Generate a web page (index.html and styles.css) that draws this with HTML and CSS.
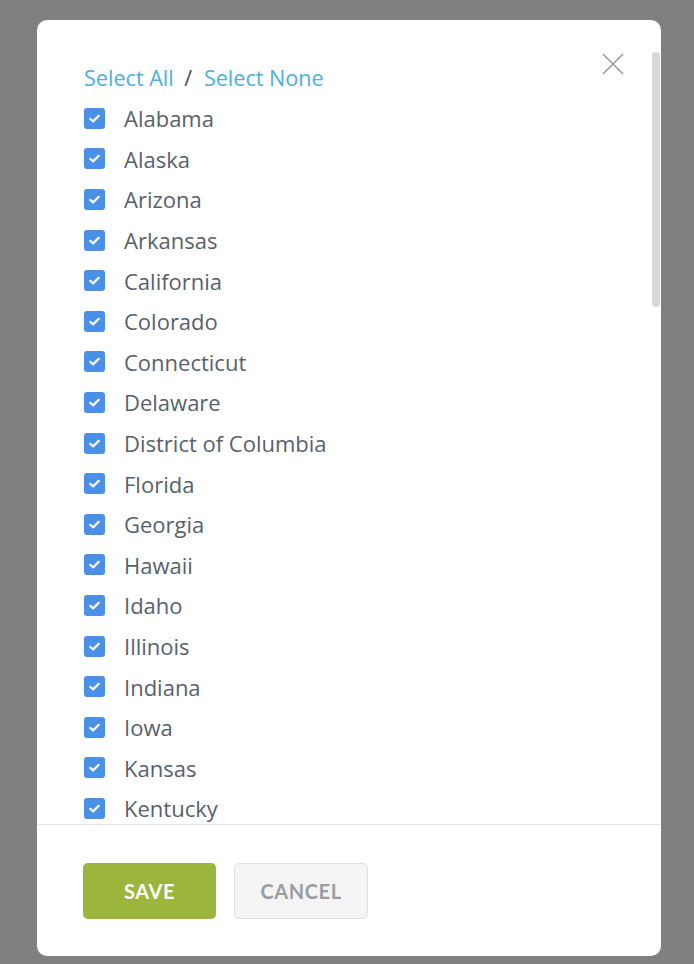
FILE: index.html
```html
<!DOCTYPE html>
<html lang="en">

<head>
    <meta charset="UTF-8">
    <meta name="viewport" content="width=device-width, initial-scale=1.0">
    <title>Select states</title>
    <link rel="stylesheet" href="styles.css">
</head>

<body>
    <div class="modal">
        <button class="close" aria-label="Close">
            <svg width="22" height="22" viewBox="0 0 22 22">
                <path d="M1 1L21 21M21 1L1 21" stroke="#9a9a9a" stroke-width="1.6" fill="none" />
            </svg>
        </button>
        <div class="thumb"></div>

        <div class="modal-body">
            <div class="select-links">
                <a href="#">Select All</a>
                <span class="sep">/</span>
                <a href="#">Select None</a>
            </div>
            <ul class="states" id="states"></ul>
        </div>

        <div class="modal-footer">
            <button class="btn btn-save">SAVE</button>
            <button class="btn btn-cancel">CANCEL</button>
        </div>
    </div>

    <script>
        // only the rows visible above the footer
        const states = ['Alabama', 'Alaska', 'Arizona', 'Arkansas', 'California', 'Colorado', 'Connecticut',
            'Delaware', 'District of Columbia', 'Florida', 'Georgia', 'Hawaii', 'Idaho', 'Illinois', 'Indiana',
            'Iowa', 'Kansas', 'Kentucky'];

        const list = document.getElementById('states');
        for (let name of states) {
            let li = document.createElement('li');
            li.innerHTML = `<span class="box"><svg width="21" height="21" viewBox="0 0 21 21"><path d="M6.2 10.8l2.9 2.6 5.7-5.6" stroke="#fff" stroke-width="2.2" fill="none" stroke-linecap="round" stroke-linejoin="round"/></svg></span><span class="name">${name}</span>`;
            list.appendChild(li);
        }
    </script>
</body>

</html>
```

FILE: styles.css
```css
body {
    margin: 0;
    background: #808080;
    font-family: "Open Sans", "Noto Sans", sans-serif;
}

.modal {
    position: relative;
    width: 624px;
    height: 936px;
    margin: 20px 0 0 37px;
    background: #fff;
    border-radius: 10px;
    overflow: hidden;
    display: flex;
    flex-direction: column;
}

.close {
    position: absolute;
    top: 33px;
    left: 565px;
    padding: 0;
    border: 0;
    background: none;
    line-height: 0;
}

.thumb {
    position: absolute;
    top: 32px;
    left: 615px;
    width: 8px;
    height: 255px;
    border-radius: 4px;
    background: #d8d8d8;
}

.modal-body {
    flex: 1;
    overflow: hidden;
    padding: 43px 47px 0;
}

.select-links {
    font-size: 21.6px;
    line-height: 30px;
    margin-bottom: 5px;
}

.select-links a {
    color: #4cb0df;
    text-decoration: none;
}

.select-links .sep {
    color: #4a4f57;
    margin: 0 6px 0 5px;
}

.states {
    list-style: none;
    margin: 0;
    padding: 0;
}

.states li {
    display: flex;
    align-items: center;
    height: 40.6px;
}

.box {
    width: 21px;
    height: 21px;
    border-radius: 3px;
    background: #4a90e6;
    line-height: 0;
    margin-right: 19px;
}

.name {
    font-size: 22px;
    color: #58616c;
}

.modal-footer {
    border-top: 1px solid #e7e7e7;
    padding: 38px 46px 37px;
    display: flex;
    gap: 18px;
}

.btn {
    height: 56px;
    border-radius: 5px;
    font-family: Lato, "Open Sans", sans-serif;
    font-weight: 700;
    font-size: 20px;
    letter-spacing: 0.6px;
    cursor: pointer;
}

.btn-save {
    width: 133px;
    background: #9cb53c;
    color: #fff;
    border: 0;
}

.btn-cancel {
    width: 134px;
    background: #f4f4f4;
    color: #9a9ea3;
    border: 1.5px solid #e0e0e0;
}
```
